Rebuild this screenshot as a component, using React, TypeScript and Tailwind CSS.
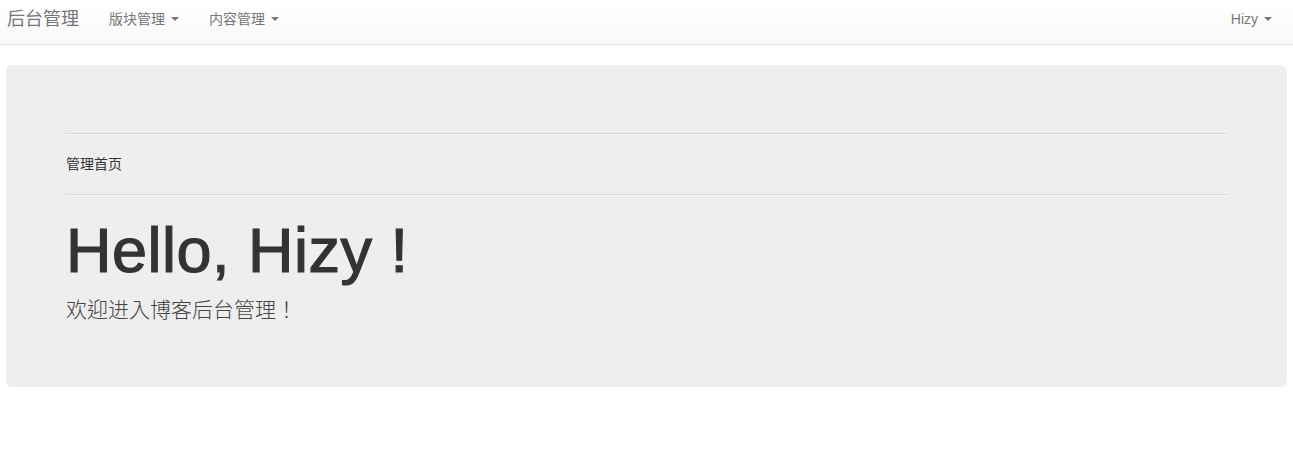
import React from "react";

const FONT = '"Liberation Sans", "Noto Sans CJK SC", Arial, sans-serif';

function Caret() {
  return (
    <span className="ml-[6px] inline-block h-0 w-0 border-t-[4px] border-x-[4px] border-t-[#777] border-x-transparent align-middle" />
  );
}

export default function App() {
  return (
    <div className="min-h-[470px] bg-white text-[14px] leading-[20px] text-[#333]" style={{ fontFamily: FONT }}>
      <nav className="flex h-[45px] items-stretch border-b border-[#e3e3e3] bg-gradient-to-b from-white to-[#f8f8f8] pb-[6px] shadow-[0_1px_2px_rgba(0,0,0,0.04)]">
        <div className="flex items-center pl-[7px] pr-[15px] text-[18px] text-[#777]">后台管理</div>
        <div className="flex items-center px-[15px] text-[#777]">
          <span>版块管理</span>
          <Caret />
        </div>
        <div className="flex items-center px-[15px] text-[#777]">
          <span>内容管理</span>
          <Caret />
        </div>
        <div className="flex-1" />
        <div className="mr-[6px] flex items-center px-[15px] text-[#777]">
          <span>Hizy</span>
          <Caret />
        </div>
      </nav>
      <div className="mx-[6px] mt-[20px] rounded-[6px] bg-[#eeeeee] px-[60px] pt-[48px] pb-[48px]">
        <div className="mt-[20px] border-t border-b border-t-[#d6d6d6] border-b-[#f7f7f7]" />
        <div className="mt-[19px] h-[20px]">管理首页</div>
        <div className="mt-[20px] border-t border-b border-t-[#d6d6d6] border-b-[#f7f7f7]" />
        <h1 className="mt-[20px] mb-[8px] text-[63px] leading-[1.1] font-normal tracking-[0.5px] text-[#333] [-webkit-text-stroke:1.2px_#333]">
          Hello, Hizy !
        </h1>
        <p
          className="mb-[16px] h-[30px] text-[21px] leading-[30px] font-light text-[#444]"
          style={{ fontFamily: '"Noto Sans CJK TC", "Noto Sans CJK SC", sans-serif' }}
        >
          欢迎进入博客后台管理！
        </p>
      </div>
    </div>
  );
}
